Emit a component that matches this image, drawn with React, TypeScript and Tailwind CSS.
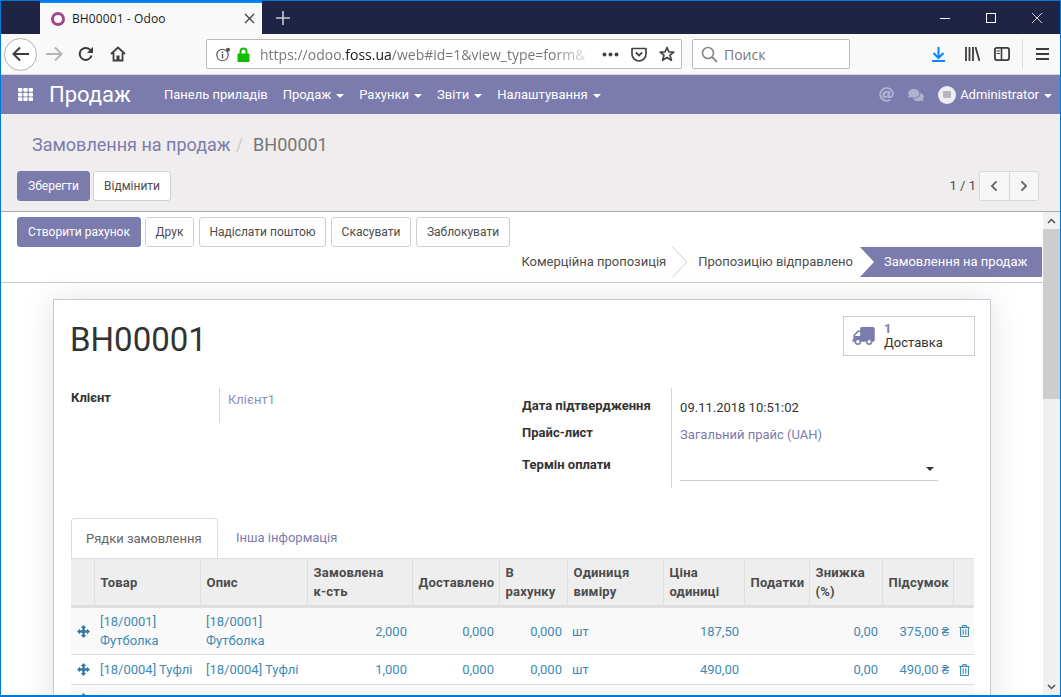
import React from "react";
import { FaTh, FaAt, FaComments, FaChevronLeft, FaChevronRight, FaTruck, FaRegTrashAlt } from "react-icons/fa";

const Caret = ({ className = "" }: { className?: string }) => (
  <span className={"inline-block w-0 h-0 border-x-[4px] border-x-transparent border-t-[4px] " + className} />
);

function NavItem({ label, ml }: { label: string; ml: string }) {
  return (
    <div className={"flex items-center " + ml}>
      <span>{label}</span>
      <Caret className="ml-[5px] mt-[2px] border-t-white" />
    </div>
  );
}

const Btn = ({ children, primary, cls = "" }: { children: React.ReactNode; primary?: boolean; cls?: string }) => (
  <div
    className={
      "h-[30px] flex items-center justify-center rounded-[3px] border text-[12px] " +
      (primary ? "bg-[#7c7bad] border-[#7c7bad] text-white " : "bg-white border-[#d0d0d0] text-[#4c4c4c] ") +
      cls
    }
  >
    {children}
  </div>
);

const Move = () => (
  <svg width="13" height="13" viewBox="0 0 13 13" className="text-[#3577a6]">
    <path d="M6.5 0L9.2 3H7.7V5.3H10V3.8L13 6.5L10 9.2V7.7H7.7V10H9.2L6.5 13L3.8 10H5.3V7.7H3V9.2L0 6.5L3 3.8V5.3H5.3V3H3.8Z" fill="currentColor" />
  </svg>
);

const widths = [23, 106, 107, 105, 87, 68, 96, 81, 65, 73, 71, 21];
const heads: { t: React.ReactNode }[] = [
  { t: "" },
  { t: "Товар" },
  { t: "Опис" },
  { t: <>Замовлена<br />к-сть</> },
  { t: "Доставлено" },
  { t: <>В<br />рахунку</> },
  { t: <>Одиниця<br />виміру</> },
  { t: <>Ціна<br />одиниці</> },
  { t: "Податки" },
  { t: <>Знижка<br />(%)</> },
  { t: "Підсумок" },
  { t: "" },
];

function Row({ h, bg, a, qty, price, total }: { h: string; bg: string; a: React.ReactNode; qty: string; price: string; total: string }) {
  const td = "px-[5px] py-0 align-middle";
  const r = td + " text-right";
  return (
    <tr className={h + " border-b border-[#dcdcdc] text-[#3e8ab5] " + bg}>
      <td className="pl-[6px] pr-0 align-middle"><Move /></td>
      <td className="pl-[6px] pr-0 align-middle">{a}</td>
      <td className="pl-[6px] pr-0 align-middle">{a}</td>
      <td className={r}>{qty}</td>
      <td className={r}>0,000</td>
      <td className={r}>0,000</td>
      <td className={td}>шт</td>
      <td className={r}>{price}</td>
      <td className={td}></td>
      <td className="pl-[5px] pr-[4px] align-middle text-right">0,00</td>
      <td className={"pl-0 pr-[4px] align-middle text-right"}>{total} ₴</td>
      <td className="pl-[6px] pr-0 align-middle"><FaRegTrashAlt className="w-[11px] h-[12px]" /></td>
    </tr>
  );
}

export default function App() {
  return (
    <div className="w-[1061px] h-[697px] overflow-hidden border border-[#0078d7] border-b-2 flex flex-col bg-white font-['Roboto',sans-serif] text-[13px] text-[#4c4c4c]">
      {/* Title bar */}
      <div className="h-[33px] shrink-0 bg-[#1f2344] flex items-stretch">
        <div className="w-[39px]" />
        <div className="w-[222px] bg-[#f9f9fa] border-t-2 border-[#0a84ff] flex items-center font-['Open_Sans',sans-serif] text-[12px] text-[#1a1a1a]">
          <svg className="ml-[10px]" width="16" height="16" viewBox="0 0 16 16"><circle cx="8" cy="8" r="5.5" fill="none" stroke="#a24689" strokeWidth="3" /></svg>
          <span className="ml-[6px] tracking-[0.1px]">ВН00001 - Odoo</span>
          <svg className="ml-auto mr-[7px]" width="11" height="11" viewBox="0 0 11 11"><path d="M1 1L10 10M10 1L1 10" stroke="#444" strokeWidth="1.4" /></svg>
        </div>
        <svg className="ml-[14px] self-center" width="14" height="14" viewBox="0 0 14 14"><path d="M7 0V14M0 7H14" stroke="#c8cad6" strokeWidth="1.6" /></svg>
        <div className="ml-auto flex items-center">
          <svg width="10" height="10" viewBox="0 0 10 10"><path d="M0 5.5H10" stroke="#fff" strokeWidth="1" /></svg>
          <svg className="ml-[36px]" width="10" height="10" viewBox="0 0 10 10"><rect x="0.5" y="0.5" width="9" height="9" fill="none" stroke="#fff" /></svg>
          <svg className="ml-[36px] mr-[18px]" width="10" height="10" viewBox="0 0 10 10"><path d="M0 0L10 10M10 0L0 10" stroke="#fff" strokeWidth="0.8" /></svg>
        </div>
      </div>

      {/* Firefox toolbar */}
      <div className="h-[41px] shrink-0 bg-[#f9f9fa] border-b border-[#d8d8d8] flex items-center font-['Open_Sans',sans-serif]">
        <div className="ml-[3px] w-[33px] h-[33px] rounded-full bg-white border border-[#b1b1b3] flex items-center justify-center">
          <svg width="18" height="16" viewBox="0 0 18 16"><path d="M8 1.5L1.5 8L8 14.5M1.5 8H17" fill="none" stroke="#3c3c3e" strokeWidth="2" /></svg>
        </div>
        <svg className="ml-[8px]" width="18" height="16" viewBox="0 0 18 16"><path d="M10 1.5L16.5 8L10 14.5M16.5 8H1" fill="none" stroke="#b5b5b6" strokeWidth="2" /></svg>
        <svg className="ml-[15px]" width="16" height="16" viewBox="0 0 16 16"><path d="M13.5 9.5A6 6 0 1 1 11.8 3.5L14 5.5" fill="none" stroke="#3c3c3e" strokeWidth="2" /><path d="M15 0.8V7H9z" fill="#3c3c3e" /></svg>
        <svg className="ml-[16px]" width="16" height="16" viewBox="0 0 16 16"><path d="M1 8L8 1.5L15 8M3.5 7V14.5H12.5V7" fill="none" stroke="#3c3c3e" strokeWidth="1.8" /><rect x="6.5" y="9.5" width="3" height="5" fill="#3c3c3e" /></svg>

        <div className="ml-[80px] w-[476px] h-[30px] bg-white border border-[#bbb] rounded-[2px] flex items-center">
          <svg className="ml-[9px]" width="15" height="15" viewBox="0 0 15 15"><circle cx="6.5" cy="8" r="5.7" fill="none" stroke="#555" strokeWidth="1.1" /><path d="M6.5 7V11.5M6.5 4.5V6" stroke="#555" strokeWidth="1.4" /><circle cx="12" cy="2.8" r="2" fill="#555" /></svg>
          <svg className="ml-[6px]" width="13" height="15" viewBox="0 0 13 15"><path d="M3.5 7V4.5a3 3 0 0 1 6 0V7" fill="none" stroke="#12bc00" strokeWidth="2" /><rect x="0.5" y="6.5" width="12" height="8.5" rx="1" fill="#12bc00" /></svg>
          <div className="ml-[10px] w-[333px] overflow-hidden whitespace-nowrap text-[14px] text-[#777] [mask-image:linear-gradient(to_right,black_88%,transparent)]">
            https://odoo.<span className="text-[#1a1a1a]">foss.ua</span>/web#id=1&amp;view_type=form&amp;
          </div>
          <svg className="ml-[9px]" width="17" height="5" viewBox="0 0 17 5"><circle cx="2.5" cy="2.5" r="2" fill="#444" /><circle cx="8.5" cy="2.5" r="2" fill="#444" /><circle cx="14.5" cy="2.5" r="2" fill="#444" /></svg>
          <svg className="ml-[12px]" width="16" height="15" viewBox="0 0 16 15"><path d="M1 1.5H15V7A7 7 0 0 1 1 7Z" fill="none" stroke="#444" strokeWidth="1.7" strokeLinejoin="round" /><path d="M4.8 5.5L8 8.5L11.2 5.5" fill="none" stroke="#444" strokeWidth="1.8" /></svg>
          <svg className="ml-[12px]" width="16" height="16" viewBox="0 0 16 16"><path d="M8 1.5L10 6H14.8L11 9.2L12.4 14.3L8 11.5L3.6 14.3L5 9.2L1.2 6H6Z" fill="none" stroke="#444" strokeWidth="1.7" strokeLinejoin="round" /></svg>
        </div>

        <div className="ml-[10px] w-[158px] h-[30px] bg-white border border-[#bbb] rounded-[2px] flex items-center">
          <svg className="ml-[8px]" width="17" height="17" viewBox="0 0 17 17"><circle cx="7" cy="7" r="5.5" fill="none" stroke="#888" strokeWidth="1.6" /><path d="M11 11L16 16" stroke="#888" strokeWidth="1.8" /></svg>
          <span className="ml-[6px] text-[14px] text-[#777]">Поиск</span>
        </div>

        <svg className="ml-[82px]" width="13" height="15" viewBox="0 0 13 15"><path d="M6.5 0V10M1.5 6L6.5 11L11.5 6" fill="none" stroke="#0a84ff" strokeWidth="2" /><path d="M0 14H13" stroke="#0a84ff" strokeWidth="2" /></svg>
        <svg className="ml-[20px]" width="15" height="14" viewBox="0 0 15 14"><path d="M1 0V14M4.5 0V14M8 0V14M10.5 0L14.5 14" fill="none" stroke="#3c3c3e" strokeWidth="1.8" /></svg>
        <svg className="ml-[14px]" width="16" height="14" viewBox="0 0 16 14"><rect x="0.9" y="0.9" width="14.2" height="12.2" rx="2" fill="none" stroke="#3c3c3e" strokeWidth="1.8" /><path d="M7.5 1V13" stroke="#3c3c3e" strokeWidth="1.6" /><path d="M2.5 4H6M2.5 6.5H6" stroke="#3c3c3e" strokeWidth="1" /></svg>
        <div className="ml-[12px] w-px h-[30px] bg-[#dcdcdc]" />
        <svg className="ml-[13px]" width="13" height="12" viewBox="0 0 13 12"><path d="M0 1H13M0 6H13M0 11H13" stroke="#3c3c3e" strokeWidth="1.8" /></svg>
      </div>

      {/* Odoo nav */}
      <div className="h-[39px] shrink-0 bg-[#7c7bad] flex items-center text-[13px] text-white">
        <FaTh className="ml-[16px] w-[17px] h-[15px]" />
        <span className="ml-[15px] text-[22px] leading-none">Продаж</span>
        <span className="ml-[33px]">Панель приладів</span>
        <NavItem label="Продаж" ml="ml-[15px]" />
        <NavItem label="Рахунки" ml="ml-[15px]" />
        <NavItem label="Звіти" ml="ml-[15px]" />
        <NavItem label="Налаштування" ml="ml-[15px]" />
        <FaAt className="ml-auto w-[15px] h-[15px] text-[#b2b1cf]" />
        <FaComments className="ml-[14px] w-[16px] h-[14px] text-[#b2b1cf]" />
        <div className="ml-[14px] w-[18px] h-[18px] rounded-full bg-[#eeeef2] flex items-center justify-center">
          <div className="w-[8px] h-[7px] bg-[#b5b5c0] rounded-[1px]" />
        </div>
        <span className="ml-[4px]">Administrator</span>
        <Caret className="ml-[5px] mr-[8px] mt-[2px] border-t-white" />
      </div>

      {/* Control panel */}
      <div className="h-[98px] shrink-0 bg-[#efeded] border-b border-[#aaa] flex flex-col">
        <div className="ml-[31px] mt-[20px] h-[22px] flex items-center text-[18px] leading-none">
          <span className="text-[#7c7bad]">Замовлення на продаж</span>
          <span className="ml-[5px] text-[#ccc]">/</span>
          <span className="ml-[10px] text-[#777]">ВН00001</span>
        </div>
        <div className="mt-[15px] flex items-center">
          <Btn primary cls="ml-[16px] w-[73px]">Зберегти</Btn>
          <Btn cls="ml-[3px] w-[78px]">Відмінити</Btn>
          <span className="ml-auto">1 / 1</span>
          <div className="ml-[3px] mr-[21px] h-[30px] w-[60px] flex border border-[#d8d8d8] rounded-[3px] bg-[#f6f6f6] text-[#666]">
            <div className="flex-1 flex items-center justify-center border-r border-[#d8d8d8]"><FaChevronLeft className="w-[10px] h-[12px]" /></div>
            <div className="flex-1 flex items-center justify-center"><FaChevronRight className="w-[10px] h-[12px]" /></div>
          </div>
        </div>
      </div>

      {/* Scrolling form */}
      <div className="flex-1 min-h-0 flex">
        <div className="flex-1 min-w-0 overflow-hidden">
          <div className="h-[71px] border-b border-[#ccc] flex flex-col">
            <div className="mt-[5px] flex">
              <Btn primary cls="ml-[16px] w-[124px]">Створити рахунок</Btn>
              <Btn cls="ml-[4px] w-[49px]">Друк</Btn>
              <Btn cls="ml-[5px] w-[127px]">Надіслати поштою</Btn>
              <Btn cls="ml-[5px] w-[80px]">Скасувати</Btn>
              <Btn cls="ml-[5px] w-[94px]">Заблокувати</Btn>
            </div>
            <div className="h-[30px] mr-[1px] flex items-center justify-end">
              <span>Комерційна пропозиція</span>
              <svg className="ml-[6px]" width="16" height="30" viewBox="0 0 16 30"><path d="M0.5 0L15 15L0.5 30" fill="none" stroke="#ccc" /></svg>
              <span className="ml-[10px]">Пропозицію відправлено</span>
              <div className="ml-[7px] w-[182px] h-[30px] pl-[24px] flex items-center bg-[#7c7bad] text-white [clip-path:polygon(0_0,100%_0,100%_100%,0_100%,14px_50%)]">
                Замовлення на продаж
              </div>
            </div>
          </div>

          <div className="ml-[52px] mt-[16px] w-[938px] h-[500px] px-[17px] border border-[#c9c9d3] bg-white shadow-[0_2px_30px_rgba(0,0,0,0.12)]">
            <div className="mt-[16px] flex justify-between">
              <h1 className="-ml-[1px] mt-[7px] text-[33px] leading-[34px] text-[#333]">ВН00001</h1>
              <div className="-mr-[2px] w-[132px] h-[40px] border border-[#ccc] flex items-center">
                <FaTruck className="ml-[8px] w-[23px] h-[18px] text-[#7c7bad] -scale-x-100" />
                <div className="ml-[9px] leading-[14px] text-[#333]">
                  <div className="font-bold text-[#7c7bad]">1</div>
                  <div>Доставка</div>
                </div>
              </div>
            </div>

            <div className="mt-[31px] h-[100px] flex">
              <div className="w-[148px] font-bold text-[#333]">Клієнт</div>
              <div className="h-[35px] border-l border-[#d5d5d5] pl-[8px] pt-[2px] text-[#8f8ec2]">Клієнт1</div>
              <div className="ml-[247px] w-[149px] font-bold text-[#333]">
                <div className="mt-[8px]">Дата підтвердження</div>
                <div className="mt-[7px]">Прайс-лист</div>
                <div className="mt-[13px]">Термін оплати</div>
              </div>
              <div className="h-[100px] border-l border-[#d5d5d5] pl-[8px]">
                <div className="mt-[10px] text-[#333]">09.11.2018 10:51:02</div>
                <div className="mt-[7px] text-[#7c7bad]">Загальний прайс (UAH)</div>
                <div className="mt-[12px] w-[258px] h-[25px] border-b border-[#ccc] flex items-center justify-end pr-[4px]">
                  <Caret className="border-t-[#333] mt-[1px]" />
                </div>
              </div>
            </div>

            <div className="mt-[30px] h-[40px] flex items-end">
              <div className="w-[147px] h-[40px] border border-b-0 border-[#ddd] rounded-t-[4px] flex items-center pl-[14px] text-[#666]">Рядки замовлення</div>
              <div className="ml-[18px] h-[40px] flex items-center text-[#7c7bad]">Інша інформація</div>
            </div>

            <table className="w-[903px] table-fixed border-collapse text-[13px] leading-[19px]">
              <colgroup>
                {widths.map((w, i) => (
                  <col key={i} style={{ width: w }} />
                ))}
              </colgroup>
              <thead>
                <tr className="h-[48px] bg-[#eeeeee] border-t border-b-[3px] border-[#dedede]">
                  {heads.map((h, i) => (
                    <th key={i} className="pl-[6px] pr-0 py-0 text-left font-bold tracking-[0.2px] text-[#4c4c4c] border-r border-[#dedede] last:border-r-0 whitespace-nowrap align-middle">
                      {h.t}
                    </th>
                  ))}
                </tr>
              </thead>
              <tbody>
                <Row h="h-[48px]" bg="bg-[#f9f9f9]" a={<>[18/0001]<br />Футболка</>} qty="2,000" price="187,50" total="375,00" />
                <Row h="h-[30px]" bg="bg-white" a={<span className="whitespace-nowrap">[18/0004] Туфлі</span>} qty="1,000" price="490,00" total="490,00" />
                <tr className="h-[30px] bg-[#f9f9f9]">
                  <td className="pl-[6px] pr-0 align-middle"><Move /></td>
                  <td colSpan={11} />
                </tr>
              </tbody>
            </table>
          </div>
        </div>

        {/* Scrollbar */}
        <div className="w-[17px] shrink-0 bg-[#f0f0f0] flex flex-col items-center">
          <svg className="mt-[6px]" width="9" height="6" viewBox="0 0 9 6"><path d="M1 5L4.5 1.5L8 5" fill="none" stroke="#505050" strokeWidth="1.5" /></svg>
          <div className="mt-[5px] w-full h-[170px] bg-[#cdcdcd]" />
          <svg className="mt-auto mb-[5px]" width="9" height="6" viewBox="0 0 9 6"><path d="M1 1L4.5 4.5L8 1" fill="none" stroke="#505050" strokeWidth="1.5" /></svg>
        </div>
      </div>
    </div>
  );
}
